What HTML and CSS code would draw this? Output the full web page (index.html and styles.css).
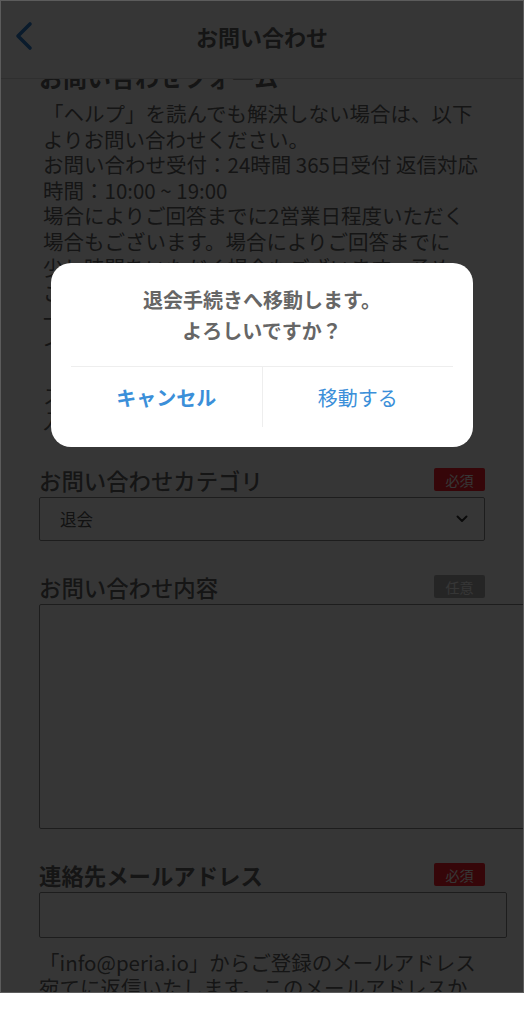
FILE: index.html
```html
<!DOCTYPE html>
<html lang="ja">
<head>
    <meta charset="UTF-8">
    <meta name="viewport" content="width=device-width, initial-scale=1.0">
    <title>お問い合わせ</title>
    <link rel="stylesheet" href="styles.css">
</head>
<body>
    <div class="screen">
        <header class="topbar">
            <a class="back" href="#">
                <svg width="20" height="32" viewBox="0 0 20 32"><path d="M16 4 L4 16 L16 28" fill="none" stroke="#2f7fd0" stroke-width="3.6" stroke-linecap="round" stroke-linejoin="round"/></svg>
            </a>
            <h1 class="topbar-title">お問い合わせ</h1>
        </header>

        <main class="content">
            <h2 class="form-title">お問い合わせフォーム</h2>
            <p class="intro">
                「ヘルプ」を読んでも解決しない場合は、以下<br>
                よりお問い合わせください。<br>
                お問い合わせ受付：24時間 365日受付 返信対応<br>
                時間：10:00 ~ 19:00<br>
                場合によりご回答までに2営業日程度いただく<br>
                場合もございます。場合によりご回答までに<br>
                少し時間をいただく場合もございます。予め<br>
                ご了承ください。<br>
                一部お答えできない場合もございます。<br>
                インストールや動作環境に関するご質問は、<br>
                「ヘルプ」ページの各項目をご覧いただくなど<br>
                スムーズな解決にご協力をお願いいたします。<br>
                入力内容に誤りがないかご確認ください。
            </p>

            <div class="field">
                <div class="field-head">
                    <label class="field-label">お問い合わせカテゴリ</label>
                    <span class="badge badge-required">必須</span>
                </div>
                <div class="select-box">
                    <span>退会</span>
                    <svg width="12" height="8" viewBox="0 0 12 8"><path d="M1.5 1.5 L6 6 L10.5 1.5" fill="none" stroke="#333" stroke-width="2" stroke-linecap="round" stroke-linejoin="round"/></svg>
                </div>
            </div>

            <div class="field">
                <div class="field-head">
                    <label class="field-label">お問い合わせ内容</label>
                    <span class="badge badge-optional">任意</span>
                </div>
                <textarea class="textarea"></textarea>
            </div>

            <div class="field">
                <div class="field-head">
                    <label class="field-label field-label-strong">連絡先メールアドレス</label>
                    <span class="badge badge-required">必須</span>
                </div>
                <input type="email" class="input">
                <p class="note">
                    「info@peria.io」からご登録のメールアドレス<br>
                    宛てに返信いたします。このメールアドレスか<br>
                    らのメールを受信できるよう設定してください。
                </p>
            </div>
        </main>

        <div class="overlay">
            <div class="dialog">
                <p class="dialog-text">退会手続きへ移動します。<br>よろしいですか？</p>
                <div class="dialog-actions">
                    <button class="dialog-btn dialog-btn-cancel">キャンセル</button>
                    <button class="dialog-btn">移動する</button>
                </div>
            </div>
        </div>
    </div>
</body>
</html>
```

FILE: styles.css
```css
body {
    margin: 0;
    background-color: #fff;
    font-family: "Noto Sans CJK JP", "Noto Sans", sans-serif;
    color: #666;
}
.screen {
    position: relative;
    width: 524px;
    height: 993px;
    box-sizing: border-box;
    border: 1px solid #5c5c5c;
    overflow: hidden;
    background-color: #fff;
}

/* header */
.topbar {
    position: relative;
    z-index: 1;
    display: grid;
    grid-template-columns: 60px 1fr 60px;
    align-items: center;
    height: 78px;
    box-sizing: border-box;
    padding-bottom: 8px;
    border-bottom: 1px solid #ddd;
    background-color: #fff;
}
.back {
    display: flex;
    padding-left: 13px;
}
.topbar-title {
    margin: 0;
    text-align: center;
    font-size: 22px;
    font-weight: 700;
    color: #666;
}

/* form */
.content {
    padding: 0 38px;
}
.form-title {
    margin: -16px 0 10px;
    font-size: 24px;
    line-height: 28px;
    font-weight: 700;
}
.intro {
    margin: 0 0 31px;
    padding-left: 4px;
    font-size: 20.5px;
    line-height: 25.6px;
}
.field {
    margin-bottom: 31px;
}
.field-head {
    display: flex;
    justify-content: space-between;
    align-items: center;
    height: 30px;
    margin-bottom: 2px;
}
.field-label {
    font-size: 22.4px;
    font-weight: 500;
}
.field-label-strong {
    font-weight: 700;
}
.badge {
    display: flex;
    align-items: center;
    justify-content: center;
    width: 51px;
    height: 23px;
    border-radius: 2px;
    font-size: 14px;
    color: #fff;
}
.badge-required {
    background-color: #ff1f2a;
}
.badge-optional {
    background-color: #b0b0b0;
}
.select-box {
    display: flex;
    justify-content: space-between;
    align-items: center;
    height: 44px;
    box-sizing: border-box;
    padding: 0 16px 0 20px;
    border: 1px solid #8a8a8a;
    border-radius: 2px;
    font-size: 16.5px;
    color: #555;
}
.textarea {
    display: block;
    width: 520px;
    height: 225px;
    box-sizing: border-box;
    border: 1px solid #8a8a8a;
    border-radius: 2px;
    resize: none;
}
.input {
    display: block;
    width: 468px;
    height: 46px;
    box-sizing: border-box;
    border: 1px solid #8a8a8a;
    border-radius: 2px;
}
.note {
    margin: 12px 0 0;
    font-size: 20.5px;
    line-height: 25.6px;
}

/* dialog */
.overlay {
    position: absolute;
    inset: 0;
    z-index: 2;
    padding: 262px 50px 0;
    background-color: rgba(0, 0, 0, 0.79);
}
.dialog {
    padding: 21px 20px 20px;
    border-radius: 20px;
    background-color: #fff;
}
.dialog-text {
    margin: 0 0 20px;
    text-align: center;
    font-size: 20px;
    line-height: 31px;
    font-weight: 700;
    color: #666;
}
.dialog-actions {
    display: flex;
    border-top: 1px solid #eee;
}
.dialog-btn {
    flex: 1;
    height: 60px;
    padding: 0;
    border: none;
    background: none;
    font-family: inherit;
    font-size: 20px;
    color: #3b8fd9;
}
.dialog-btn + .dialog-btn {
    border-left: 1px solid #eee;
}
.dialog-btn-cancel {
    font-weight: 700;
}
```
